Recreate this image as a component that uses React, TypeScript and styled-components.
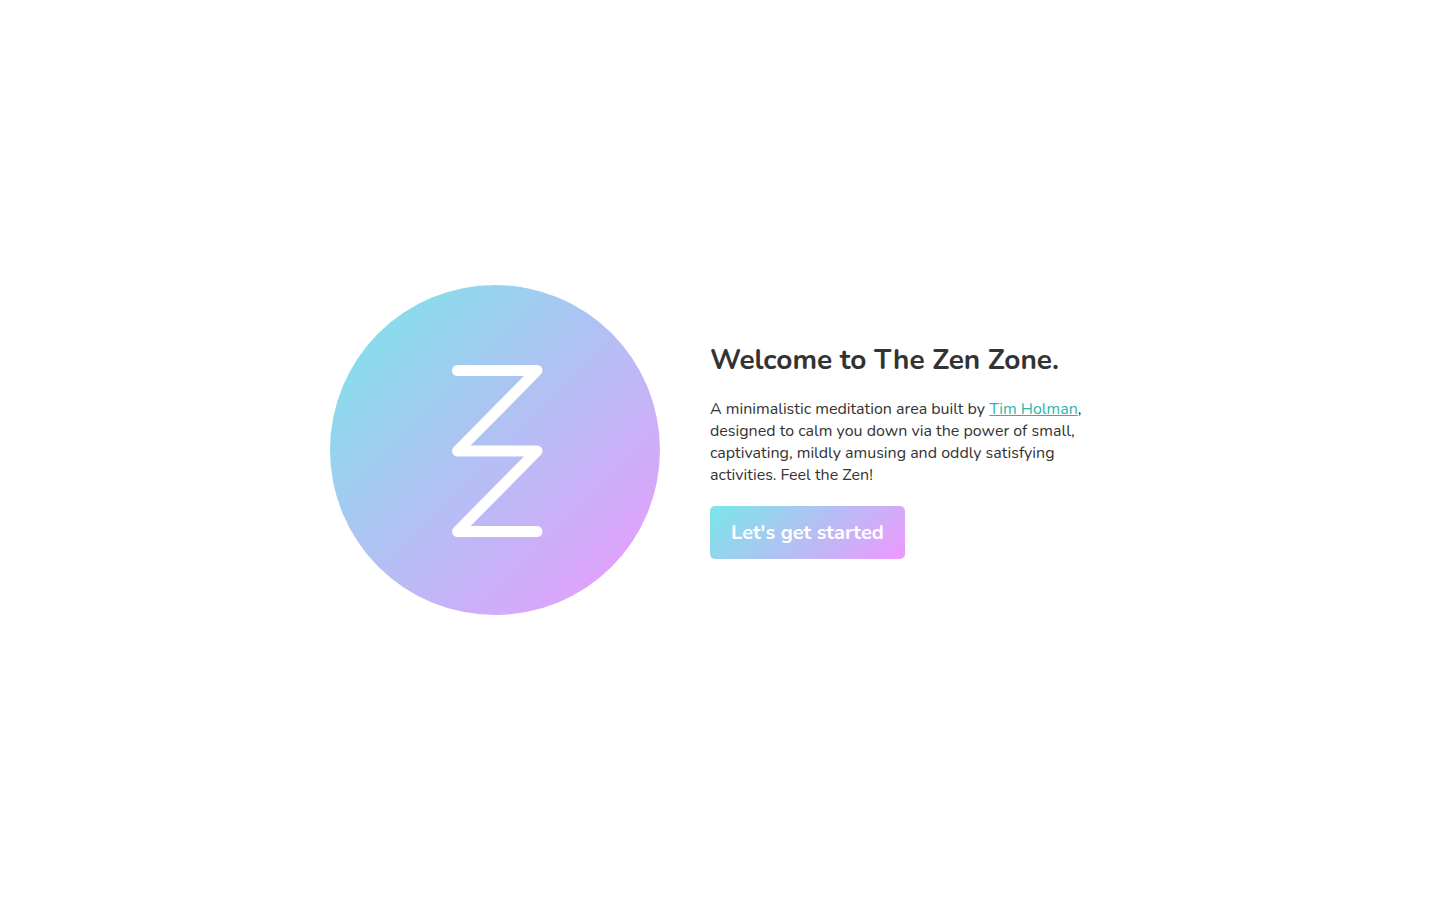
import React from "react";
import styled, { createGlobalStyle, css } from "styled-components";

const GlobalStyle = createGlobalStyle`
  body {
    margin: 0;
    background: #fff;
    color: #333;
    font-family: Nunito, Lato, sans-serif;
    font-size: 16px;
    line-height: 22px;
  }
`;

const zenGradient = css`
  background: linear-gradient(135deg, #79e7e8 0%, #b8bcf5 54%, #ee98fd 100%);
`;

const Page = styled.main`
  min-height: 100vh;
  display: flex;
  flex-wrap: wrap;
  align-items: center;
  align-content: center;
  justify-content: center;
  gap: 50px;
`;

const Emblem = styled.div`
  ${zenGradient}
  width: 330px;
  aspect-ratio: 1;
  border-radius: 50%;
`;

const Mark = styled.svg`
  display: block;
  width: 100%;
  height: 100%;
`;

const Intro = styled.section`
  flex: 0 1 400px;
`;

const Title = styled.h1`
  margin: 0 0 19px;
  font-size: 28px;
  line-height: 38px;
  font-weight: 700;
`;

const Description = styled.p`
  margin: 0 0 20px;
`;

const AuthorLink = styled.a`
  color: #2eb5aa;
`;

const StartButton = styled.button`
  ${zenGradient}
  display: block;
  border: 0;
  border-radius: 5px;
  padding: 13px 21px;
  color: #fff;
  font: inherit;
  font-size: 20px;
  line-height: 27px;
  font-weight: 700;
  cursor: pointer;
`;

export default function App() {
  return (
    <>
      <GlobalStyle />
      <Page>
        <Emblem>
          <Mark viewBox="0 0 330 330" role="img" aria-label="The Zen Zone">
            <path
              d="M127.5 85.5H207L127.5 166H207L127.5 246.5H207"
              fill="none"
              stroke="#fff"
              strokeWidth="11"
              strokeLinecap="round"
              strokeLinejoin="round"
            />
          </Mark>
        </Emblem>
        <Intro>
          <Title>Welcome to The Zen Zone.</Title>
          <Description>
            A minimalistic meditation area built by{" "}
            <AuthorLink href="#tim-holman">Tim Holman</AuthorLink>, designed to
            calm you down via the power of small, captivating, mildly amusing
            and oddly satisfying activities. Feel the Zen!
          </Description>
          <StartButton type="button">Let's get started</StartButton>
        </Intro>
      </Page>
    </>
  );
}
